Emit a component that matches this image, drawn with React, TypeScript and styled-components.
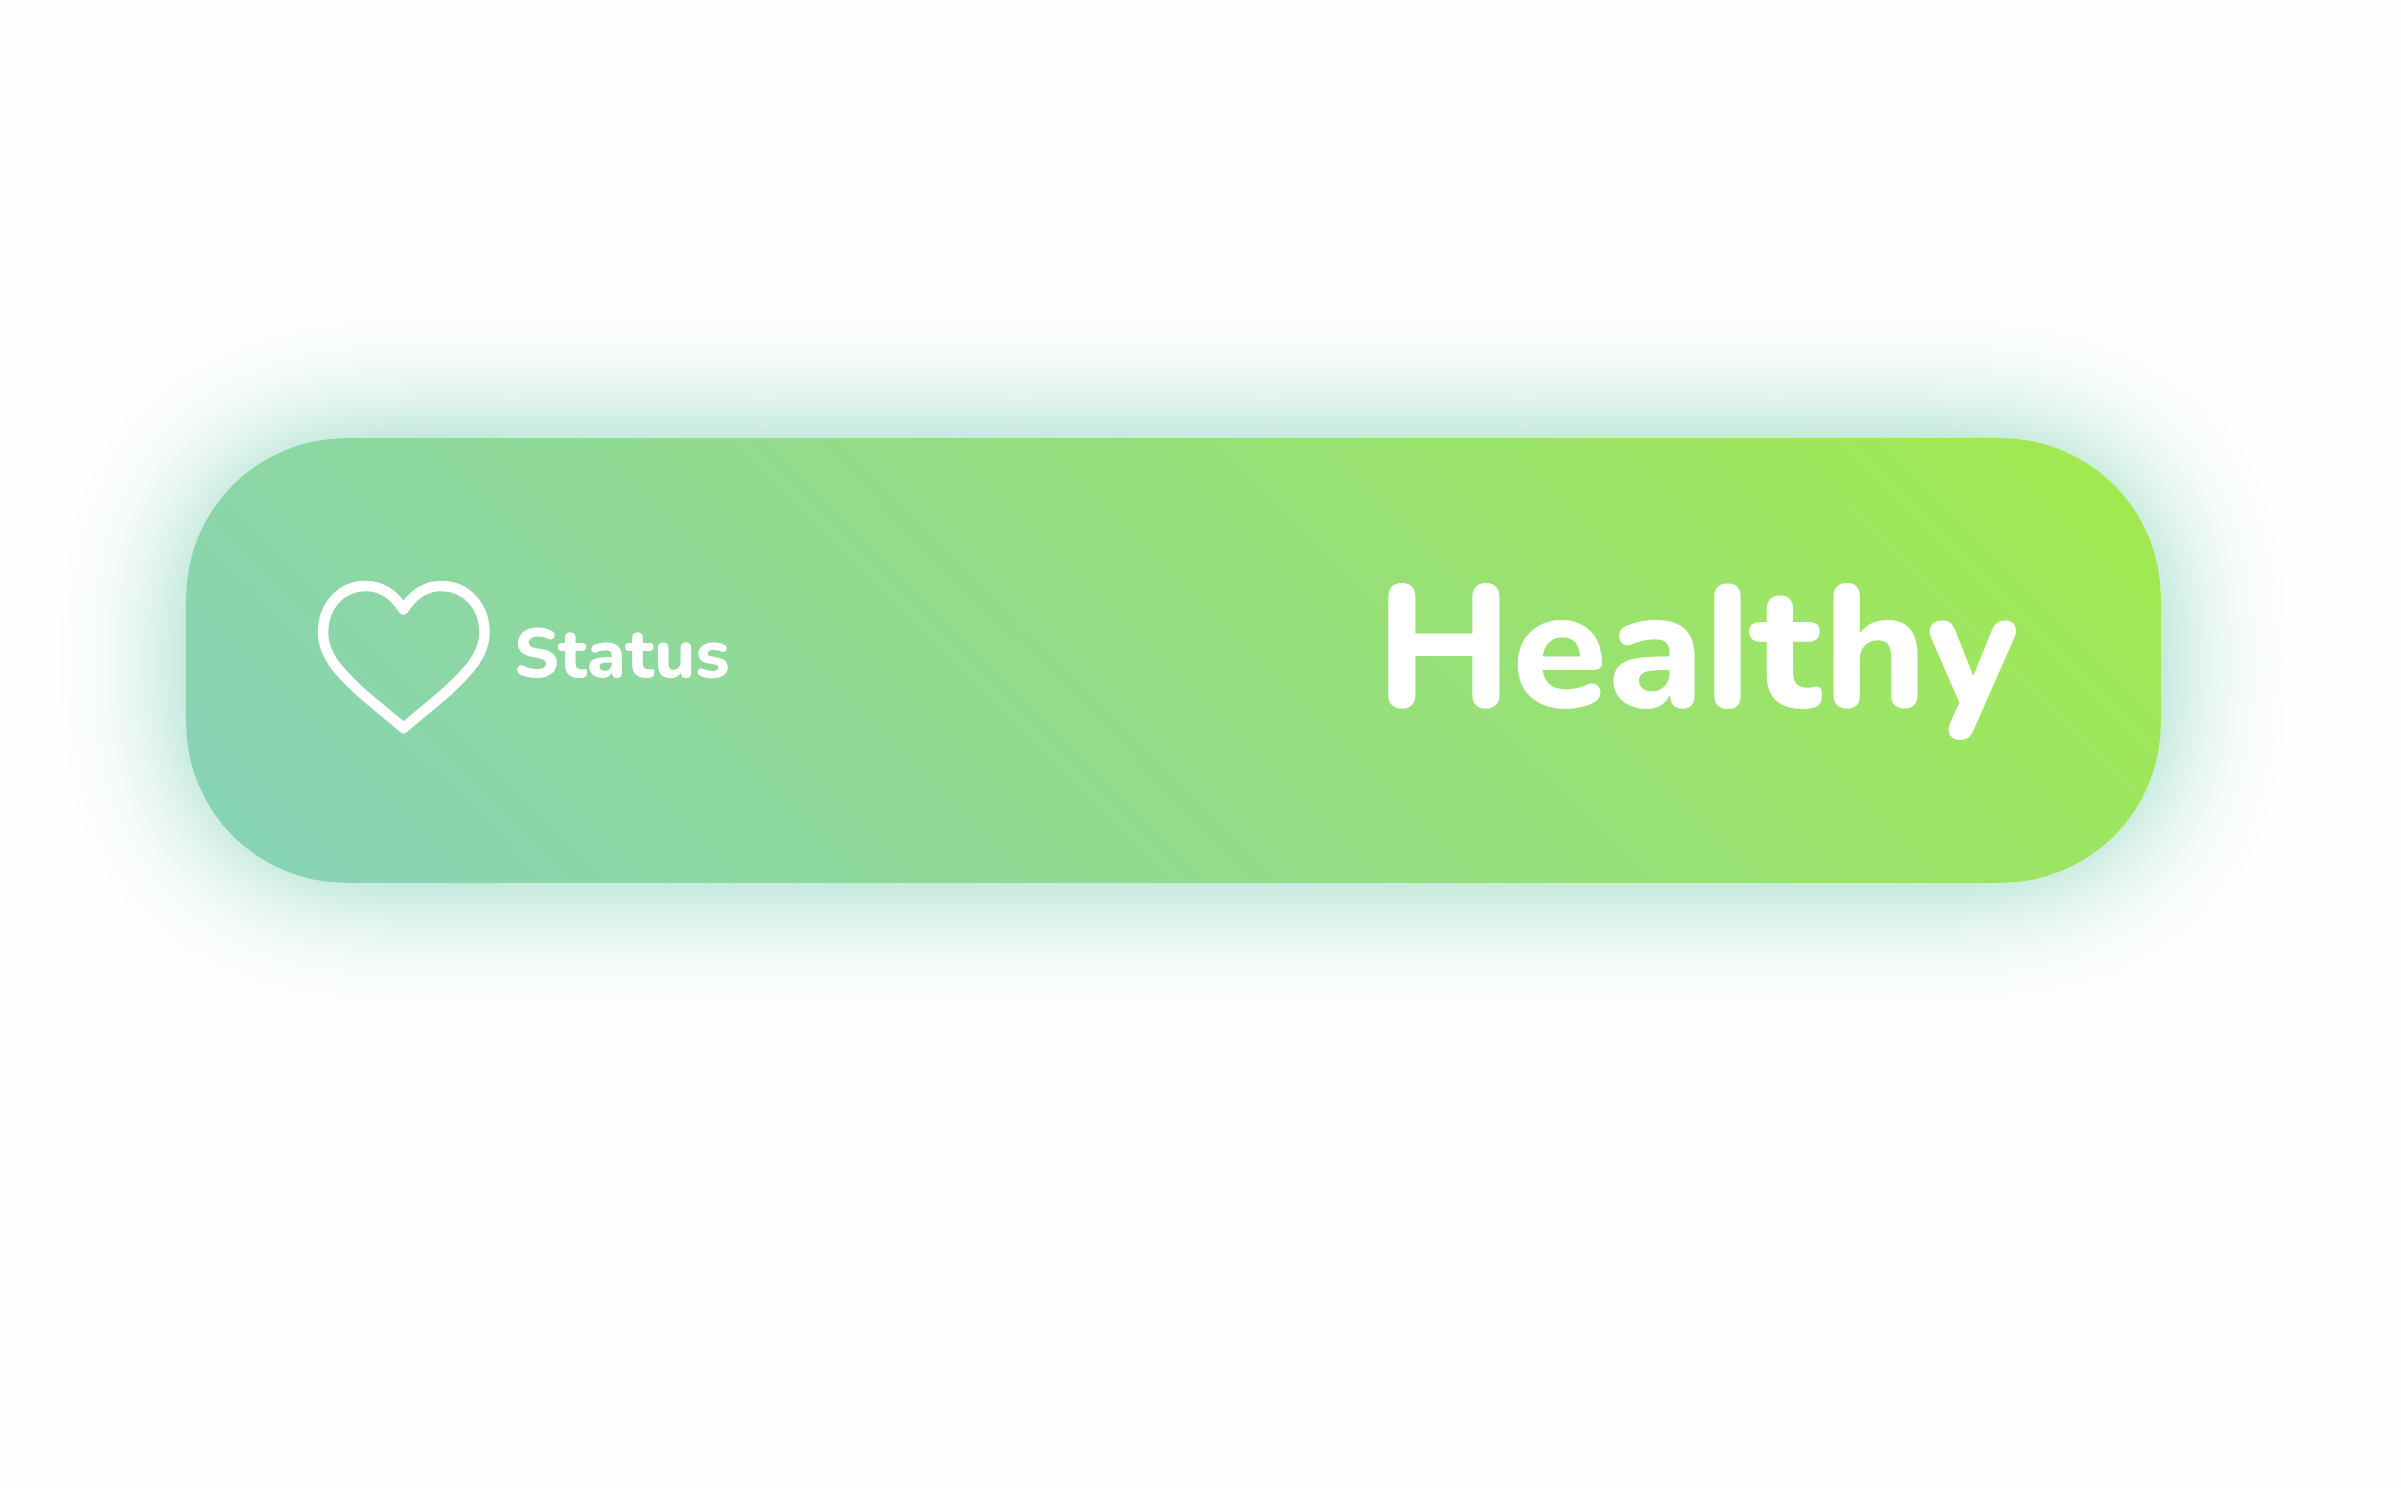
import styled, { createGlobalStyle } from "styled-components";

const GlobalStyle = createGlobalStyle`
  *,
  *::before,
  *::after {
    box-sizing: border-box;
  }

  body {
    margin: 0;
    background: #fefefe;
    font-family: Nunito, Lato, "Open Sans", sans-serif;
    font-feature-settings: "ss02";
  }
`;

const Page = styled.main`
  padding: 438px 240px 240px 186px;
`;

const StatusCard = styled.section`
  display: flex;
  align-items: center;
  justify-content: space-between;
  min-height: 445px;
  padding: 0 142px 14px 132px;
  border-radius: 160px;
  background: linear-gradient(45deg, #86d2bb 0%, #a2ea4c 100%);
  box-shadow: 0 0 128px #8dd7bd;
  color: #ffffff;
`;

const Label = styled.h2`
  display: flex;
  align-items: center;
  gap: 24px;
  margin: 0;
  font-size: 70px;
  font-weight: 800;
  line-height: 96px;
`;

const HeartIcon = styled.svg`
  display: block;
  flex: none;
  width: 172px;
  height: 148px;
  overflow: visible;
`;

const Value = styled.p`
  margin: 0;
  padding-bottom: 8px;
  font-size: 174px;
  font-weight: 800;
  line-height: 240px;
`;

export default function App() {
  return (
    <>
      <GlobalStyle />
      <Page>
        <StatusCard>
          <Label>
            <HeartIcon viewBox="0 0 172 148" fill="none" aria-hidden="true">
              <path
                d="M85.5 29.5C76 14.5 63.5 6 47.5 6C22.5 6 5 26.5 5 52.5C5 74.500 20 91 41.500 111C51.500 120 66 131.500 85.500 148C105 131.500 119.500 120 129.500 111C151 91 166.500 74.500 166.500 52.500C166.500 26.500 148.500 6 123.500 6C107.500 6 95 14.500 85.500 29.500Z"
                stroke="currentColor"
                strokeWidth="10.5"
                strokeLinejoin="round"
              />
            </HeartIcon>
            Status
          </Label>
          <Value>Healthy</Value>
        </StatusCard>
      </Page>
    </>
  );
}
